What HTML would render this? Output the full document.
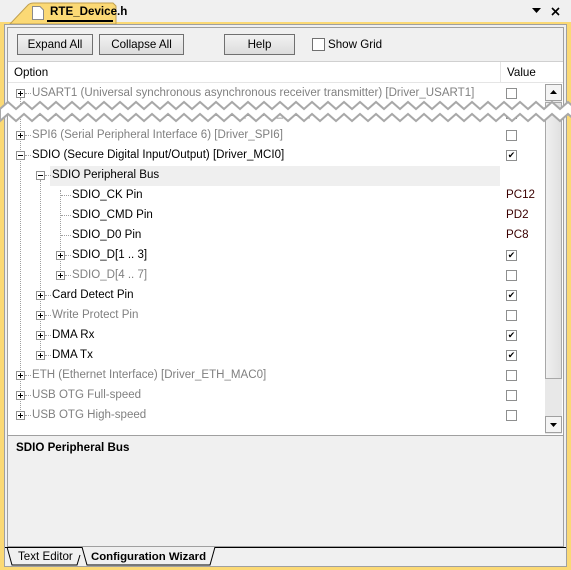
<!DOCTYPE html>
<html><head><style>
*{margin:0;padding:0;box-sizing:border-box}
body{width:571px;height:570px;background:#f0f0f0;position:relative;overflow:hidden;font-family:"Liberation Sans",sans-serif;font-size:12px;color:#000}
.a{position:absolute}
.btn{position:absolute;top:34px;height:21px;border:1px solid #707070;background:linear-gradient(#f2f2f2,#dcdcdc);text-align:center;line-height:19px;font-size:11.6px}
.row{position:absolute;height:20px;line-height:20px;white-space:nowrap;font-size:11.55px}
.g{color:#808080}
.pm{position:absolute;width:9px;height:9px;border:1px solid #919191;background:#fff}
.pm:before{content:"";position:absolute;left:1px;top:3px;width:5px;height:1px;background:#000}
.pm.p:after{content:"";position:absolute;left:3px;top:1px;width:1px;height:5px;background:#000}
.cb{position:absolute;left:506px;width:11px;height:11px;border:1px solid #8e8f8f;background:#fff;font-size:9px;line-height:9px;text-align:center}
.val{position:absolute;left:506px;height:20px;line-height:20px;color:#3a0000;font-size:11.6px}
.hd{position:absolute;border-top:1px dotted #a0a0a0;height:0}
.vd{position:absolute;border-left:1px dotted #a0a0a0;width:0}
</style></head><body>
<div class="a" style="left:0;top:22px;width:571px;height:548px;background:#fbd975"></div>
<svg class="a" style="left:0;top:0" width="130" height="24"><path d="M10 24 L28 5 Q30 3 34 3 L113 3 L116 6 L116 24 Z" fill="#fbd975" stroke="#c0a050"/></svg>
<svg class="a" style="left:32px;top:6px" width="12" height="14"><path d="M0.5 0.5 H8 L11.5 4 V13.5 H0.5 Z" fill="#fff" stroke="#8a8a8a"/></svg>
<div class="a" style="left:50px;top:4px;font-weight:bold;font-size:11.6px;line-height:16px">RTE_Device.h</div>
<div class="a" style="left:47px;top:20px;width:66px;height:2px;background:#000"></div>
<svg class="a" style="left:532px;top:8px" width="10" height="6"><path d="M0 0 H9 L4.5 5 Z" fill="#000"/></svg>
<svg class="a" style="left:551px;top:7px" width="9" height="9"><path d="M1 1 L8 8 M8 1 L1 8" stroke="#000" stroke-width="1.6"/></svg>
<div class="a" style="left:4px;top:24px;width:563px;height:543px;background:#f0f0f0;border:1px solid #a0a0a0"></div>
<div class="a" style="left:7px;top:27px;width:557px;height:520px;border:1px solid #a0a0a0;background:#f0f0f0"></div>
<div class="btn" style="left:17px;width:76px">Expand All</div>
<div class="btn" style="left:99px;width:85px">Collapse All</div>
<div class="btn" style="left:224px;width:71px">Help</div>
<div class="a" style="left:312px;top:38px;width:13px;height:13px;border:1px solid #707070;background:#fff"></div>
<div class="a" style="left:328px;top:37px;line-height:16px;font-size:11.6px">Show Grid</div>
<div class="a" style="left:8px;top:61px;width:555px;height:374px;background:#fff;border-top:1px solid #d0d0d0"></div>
<div class="a" style="left:8px;top:62px;width:555px;height:21px;background:#fff;border-bottom:1px solid #e5e5e5"></div>
<div class="a" style="left:14px;top:64px;line-height:18px;font-size:11.6px">Option</div>
<div class="a" style="left:500px;top:62px;width:1px;height:21px;background:#e5e5e5"></div>
<div class="a" style="left:507px;top:64px;line-height:18px;font-size:11.6px">Value</div>
<div class="vd" style="left:20px;top:98px;height:320px"></div>
<div class="vd" style="left:40px;top:180px;height:178px"></div>
<div class="vd" style="left:60px;top:190px;height:88px"></div>
<div class="a" style="left:50px;top:166px;width:450px;height:20px;background:#efefef"></div>

<div class="pm p" style="left:16px;top:89px"></div><div class="hd" style="left:25px;top:93px;width:6px"></div><div class="row g" style="left:32px;top:83px">USART1 (Universal synchronous asynchronous receiver transmitter) [Driver_USART1]</div><div class="cb" style="top:88px"></div>
<div class="row g" style="left:32px;top:103px">I2C1 (Inter-integrated Circuit Interface 1) [Driver_I2C1]</div><div class="cb" style="top:108px"></div>
<div class="pm p" style="left:16px;top:131px"></div><div class="hd" style="left:25px;top:135px;width:6px"></div><div class="row g" style="left:32px;top:125px">SPI6 (Serial Peripheral Interface 6) [Driver_SPI6]</div><div class="cb" style="top:130px"></div>
<div class="pm" style="left:16px;top:151px"></div><div class="hd" style="left:25px;top:155px;width:6px"></div><div class="row" style="left:32px;top:145px">SDIO (Secure Digital Input/Output) [Driver_MCI0]</div><div class="cb" style="top:150px">✔</div>
<div class="pm" style="left:36px;top:171px"></div><div class="hd" style="left:45px;top:175px;width:6px"></div><div class="row" style="left:52px;top:165px">SDIO Peripheral Bus</div>
<div class="hd" style="left:61px;top:195px;width:10px"></div><div class="row" style="left:72px;top:185px">SDIO_CK Pin</div><div class="val" style="top:185px">PC12</div>
<div class="hd" style="left:61px;top:215px;width:10px"></div><div class="row" style="left:72px;top:205px">SDIO_CMD Pin</div><div class="val" style="top:205px">PD2</div>
<div class="hd" style="left:61px;top:235px;width:10px"></div><div class="row" style="left:72px;top:225px">SDIO_D0 Pin</div><div class="val" style="top:225px">PC8</div>
<div class="pm p" style="left:56px;top:251px"></div><div class="hd" style="left:65px;top:255px;width:6px"></div><div class="row" style="left:72px;top:245px">SDIO_D[1 .. 3]</div><div class="cb" style="top:250px">✔</div>
<div class="pm p" style="left:56px;top:271px"></div><div class="hd" style="left:65px;top:275px;width:6px"></div><div class="row g" style="left:72px;top:265px">SDIO_D[4 .. 7]</div><div class="cb" style="top:270px"></div>
<div class="pm p" style="left:36px;top:291px"></div><div class="hd" style="left:45px;top:295px;width:6px"></div><div class="row" style="left:52px;top:285px">Card Detect Pin</div><div class="cb" style="top:290px">✔</div>
<div class="pm p" style="left:36px;top:311px"></div><div class="hd" style="left:45px;top:315px;width:6px"></div><div class="row g" style="left:52px;top:305px">Write Protect Pin</div><div class="cb" style="top:310px"></div>
<div class="pm p" style="left:36px;top:331px"></div><div class="hd" style="left:45px;top:335px;width:6px"></div><div class="row" style="left:52px;top:325px">DMA Rx</div><div class="cb" style="top:330px">✔</div>
<div class="pm p" style="left:36px;top:351px"></div><div class="hd" style="left:45px;top:355px;width:6px"></div><div class="row" style="left:52px;top:345px">DMA Tx</div><div class="cb" style="top:350px">✔</div>
<div class="pm p" style="left:16px;top:371px"></div><div class="hd" style="left:25px;top:375px;width:6px"></div><div class="row g" style="left:32px;top:365px">ETH (Ethernet Interface) [Driver_ETH_MAC0]</div><div class="cb" style="top:370px"></div>
<div class="pm p" style="left:16px;top:391px"></div><div class="hd" style="left:25px;top:395px;width:6px"></div><div class="row g" style="left:32px;top:385px">USB OTG Full-speed</div><div class="cb" style="top:390px"></div>
<div class="pm p" style="left:16px;top:411px"></div><div class="hd" style="left:25px;top:415px;width:6px"></div><div class="row g" style="left:32px;top:405px">USB OTG High-speed</div><div class="cb" style="top:410px"></div>
<div class="a" style="left:545px;top:84px;width:17px;height:350px;background:#e8e8e8"></div>
<div class="a" style="left:545px;top:84px;width:17px;height:17px;border:1px solid #a0a0a0;background:#f4f4f4"><svg class="a" style="left:4px;top:5px" width="8" height="5"><path d="M0 4 H7 L3.5 0 Z" fill="#000"/></svg></div>
<div class="a" style="left:545px;top:102px;width:17px;height:277px;border:1px solid #a8a8a8;background:linear-gradient(90deg,#f0f0f0,#e0e0e0)"></div>
<div class="a" style="left:545px;top:416px;width:17px;height:17px;border:1px solid #a0a0a0;background:#f4f4f4"><svg class="a" style="left:4px;top:6px" width="8" height="5"><path d="M0 0 H7 L3.5 4 Z" fill="#000"/></svg></div>
<svg class="a" style="left:0;top:100px" width="571" height="32">
<path d="M0 9 L8 2 L16 9 L24 2 L32 9 L40 2 L48 9 L56 2 L64 9 L72 2 L80 9 L88 2 L96 9 L104 2 L112 9 L120 2 L128 9 L136 2 L144 9 L152 2 L160 9 L168 2 L176 9 L184 2 L192 9 L200 2 L208 9 L216 2 L224 9 L232 2 L240 9 L248 2 L256 9 L264 2 L272 9 L280 2 L288 9 L296 2 L304 9 L312 2 L320 9 L328 2 L336 9 L344 2 L352 9 L360 2 L368 9 L376 2 L384 9 L392 2 L400 9 L408 2 L416 9 L424 2 L432 9 L440 2 L448 9 L456 2 L464 9 L472 2 L480 9 L488 2 L496 9 L504 2 L512 9 L520 2 L528 9 L536 2 L544 9 L552 2 L560 9 L568 2 L576 9 L576 21 L568 14 L560 21 L552 14 L544 21 L536 14 L528 21 L520 14 L512 21 L504 14 L496 21 L488 14 L480 21 L472 14 L464 21 L456 14 L448 21 L440 14 L432 21 L424 14 L416 21 L408 14 L400 21 L392 14 L384 21 L376 14 L368 21 L360 14 L352 21 L344 14 L336 21 L328 14 L320 21 L312 14 L304 21 L296 14 L288 21 L280 14 L272 21 L264 14 L256 21 L248 14 L240 21 L232 14 L224 21 L216 14 L208 21 L200 14 L192 21 L184 14 L176 21 L168 14 L160 21 L152 14 L144 21 L136 14 L128 21 L120 14 L112 21 L104 14 L96 21 L88 14 L80 21 L72 14 L64 21 L56 14 L48 21 L40 14 L32 21 L24 14 L16 21 L8 14 L0 21 Z" fill="#fff" stroke="#a8a8a8" stroke-width="2"/>
</svg>
<div class="a" style="left:8px;top:435px;width:555px;height:111px;border-top:1px solid #a0a0a0;background:#f0f0f0"></div>
<div class="a" style="left:16px;top:440px;font-weight:bold;line-height:16px;font-size:11.6px">SDIO Peripheral Bus</div>
<div class="a" style="left:5px;top:547px;width:561px;height:1px;background:#000"></div>
<svg class="a" style="left:5px;top:547px" width="220" height="20"><path d="M2 0 L7 18 L72 18 L75 8" fill="none" stroke="#000"/><path d="M77 0 L82 18 L205 18 L210 0" fill="#f0f0f0" stroke="#000"/></svg>
<div class="a" style="left:18px;top:549px;line-height:16px;font-size:11.6px">Text Editor</div>
<div class="a" style="left:91px;top:549px;line-height:16px;font-size:11.4px;font-weight:bold">Configuration Wizard</div>
</body></html>
